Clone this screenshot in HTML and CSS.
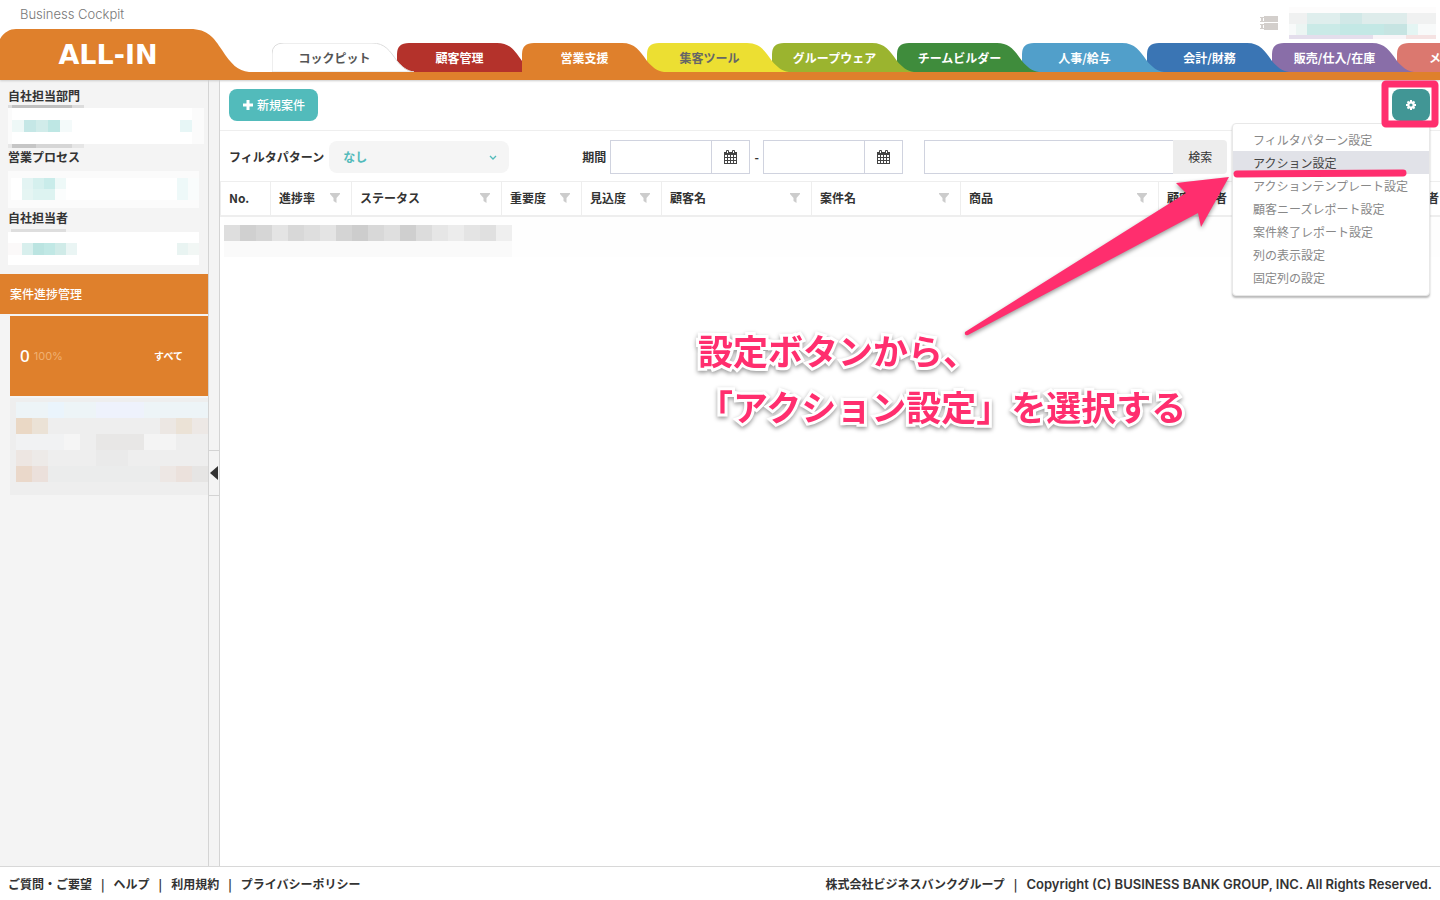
FILE: index.html
```html
<!DOCTYPE html>
<html lang="ja">
<head>
  <meta charset="UTF-8">
  <title>ALL-IN</title>
  <link rel="stylesheet" href="styles.css">
</head>
<body>
  <svg class="defs" aria-hidden="true">
    <symbol id="tab" viewBox="0 0 142 29">
      <path d="M0 29V11Q0 0 12 0H100C113 0 118 8 125 18C130 24 135 28 142 29Z"/>
    </symbol>
    <symbol id="funnel" viewBox="0 0 10 10">
      <path d="M0 0H10V1L6.500 5V10L3.500 8V5L0 1Z"/>
    </symbol>
    <symbol id="calendar" viewBox="0 0 13 14">
      <path d="M0 2H13V14H0ZM1 5V7H3V5ZM4 5V7H6V5ZM7 5V7H9V5ZM10 5V7H12V5ZM1 8V10H3V8ZM4 8V10H6V8ZM7 8V10H9V8ZM10 8V10H12V8ZM1 11V13H3V11ZM4 11V13H6V11ZM7 11V13H9V11ZM10 11V13H12V11Z" fill-rule="evenodd"/>
      <rect x="2" width="3" height="4" rx="1"/>
      <rect x="8" width="3" height="4" rx="1"/>
      <path d="M3.500 1V3M9.500 1V3" stroke="#fff"/>
    </symbol>
  </svg>

  <header class="header">
    <div class="brand">
      <div class="product">Business Cockpit</div>
      <a class="logo" href="#">
        <svg width="272" height="51" viewBox="0 0 272 51">
          <path d="M0 51V10C4 3 10 0 16 0H190C208 0 214 9 222 21C231 35 238 42 249 43H272V51Z" fill="#df802c"/>
        </svg>
        <span>ALL-IN</span>
      </a>
    </div>
    <div class="header-right">
      <div class="user">
        <svg width="18" height="15" viewBox="0 0 18 15" fill="#d3cfcc">
          <path d="M4 0H18V6H4ZM4 7H18V14H4Z"/>
          <path d="M0 1H4V2H3V5H4V6H0V5H1V2H0ZM0 8H4V9H3V12H4V13H0V12H1V9H0Z"/>
        </svg>
        <svg width="147" height="34" viewBox="0 0 147 34" shape-rendering="crispEdges">
          <rect width="147" height="6" fill="#fdfcfc"/>
          <rect y="6" width="147" height="11" fill="#f0f1f1"/>
          <rect x="18" y="6" width="33" height="11" fill="#dfeeed"/>
          <rect x="51" y="6" width="22" height="11" fill="#d1e8e7"/>
          <rect x="73" y="6" width="45" height="11" fill="#deeceb"/>
          <rect y="17" width="147" height="11" fill="#f8fafa"/>
          <rect x="7" y="17" width="11" height="11" fill="#ecf5f3"/>
          <rect x="18" y="17" width="33" height="11" fill="#caeae7"/>
          <rect x="51" y="17" width="44" height="11" fill="#c3e8e5"/>
          <rect x="95" y="17" width="23" height="11" fill="#c6e4e2"/>
          <rect x="118" y="17" width="11" height="11" fill="#e4f5f3"/>
          <rect y="28" width="84" height="4" fill="#e4deec"/>
          <rect x="84" y="28" width="33" height="4" fill="#f8f5f8"/>
          <rect x="117" y="28" width="30" height="4" fill="#f5e3e3"/>
        </svg>
      </div>
      <nav class="tabs">
        <a class="tab cockpit" href="#"><svg><use href="#tab"/></svg><span>コックピット</span></a>
        <a class="tab customer" href="#"><svg><use href="#tab"/></svg><span>顧客管理</span></a>
        <a class="tab sales" href="#"><svg><use href="#tab"/></svg><span>営業支援</span></a>
        <a class="tab leads" href="#"><svg><use href="#tab"/></svg><span>集客ツール</span></a>
        <a class="tab groupware" href="#"><svg><use href="#tab"/></svg><span>グループウェア</span></a>
        <a class="tab team" href="#"><svg><use href="#tab"/></svg><span>チームビルダー</span></a>
        <a class="tab hr" href="#"><svg><use href="#tab"/></svg><span>人事/給与</span></a>
        <a class="tab finance" href="#"><svg><use href="#tab"/></svg><span>会計/財務</span></a>
        <a class="tab stock" href="#"><svg><use href="#tab"/></svg><span>販売/仕入/在庫</span></a>
        <a class="tab mail" href="#"><svg><use href="#tab"/></svg><span>メール</span></a>
      </nav>
    </div>
  </header>

  <div class="layout">
    <aside class="sidebar">
      <div class="search-fields">
        <h2>自社担当部門</h2>
        <svg width="196" height="43" viewBox="0 0 196 43" shape-rendering="crispEdges">
          <rect width="76" height="3" fill="#dcdcdc"/>
          <rect x="4" width="60" height="3" fill="#c0c0c0"/>
          <rect y="3" width="196" height="36" fill="#fbfbfb"/>
          <rect x="4" y="3" width="180" height="36" fill="#fff"/>
          <rect x="4" y="15" width="12" height="12" fill="#eef8f7"/>
          <rect x="16" y="15" width="12" height="12" fill="#c5e7e6"/>
          <rect x="28" y="15" width="12" height="12" fill="#d1ecea"/>
          <rect x="40" y="15" width="12" height="12" fill="#bee7e4"/>
          <rect x="52" y="15" width="12" height="12" fill="#f4fafa"/>
          <rect x="172" y="15" width="12" height="12" fill="#e7f6f6"/>
          <rect y="39" width="76" height="4" fill="#e6e6e6"/>
          <rect x="4" y="39" width="24" height="4" fill="#c6c6c6"/>
          <rect x="28" y="39" width="36" height="4" fill="#d6d6d6"/>
        </svg>
        <h2>営業プロセス</h2>
        <svg width="196" height="43" viewBox="0 0 196 43" shape-rendering="crispEdges">
          <rect y="5" width="191" height="37" fill="#fbfbfb"/>
          <rect x="3" y="12" width="188" height="22" fill="#fff"/>
          <rect x="14" y="12" width="11" height="11" fill="#e3f4f3"/>
          <rect x="25" y="12" width="11" height="11" fill="#d5f0ee"/>
          <rect x="36" y="12" width="11" height="11" fill="#c9ecea"/>
          <rect x="47" y="12" width="11" height="11" fill="#eef9f8"/>
          <rect x="14" y="23" width="11" height="11" fill="#e5f5f3"/>
          <rect x="25" y="23" width="22" height="11" fill="#ddf3f1"/>
          <rect x="47" y="23" width="11" height="11" fill="#fbfdfd"/>
          <rect x="169" y="12" width="11" height="22" fill="#eef9f9"/>
          <rect x="180" y="12" width="11" height="22" fill="#f9fcfc"/>
        </svg>
        <h2>自社担当者</h2>
        <svg width="196" height="43" viewBox="0 0 196 43" shape-rendering="crispEdges">
          <rect x="3" y="2" width="55" height="3" fill="#dedede"/>
          <rect y="5" width="191" height="33" fill="#fff"/>
          <rect y="16" width="14" height="12" fill="#fbf9f9"/>
          <rect x="14" y="16" width="11" height="12" fill="#d8efed"/>
          <rect x="25" y="16" width="11" height="12" fill="#bbe4e1"/>
          <rect x="36" y="16" width="11" height="12" fill="#c1e8e5"/>
          <rect x="47" y="16" width="11" height="12" fill="#d0ebe8"/>
          <rect x="58" y="16" width="11" height="12" fill="#eaf5f4"/>
          <rect x="169" y="16" width="11" height="12" fill="#e9f4f2"/>
          <rect x="180" y="16" width="11" height="12" fill="#f2f7f5"/>
        </svg>
      </div>
      <a class="progress-title" href="#">案件進捗管理</a>
      <a class="progress-item" href="#">
        <span class="count">0</span>
        <span class="percent">100%</span>
        <span class="all">すべて</span>
      </a>
      <svg class="stages" width="198" height="97" viewBox="0 0 198 97" shape-rendering="crispEdges">
        <rect width="198" height="97" fill="#eee"/>
        <rect x="6" y="4" width="192" height="16" fill="#edf4f7"/>
        <rect x="38" y="4" width="16" height="16" fill="#eaf4fc"/>
        <rect x="86" y="4" width="48" height="16" fill="#eef2fc"/>
        <rect x="6" y="20" width="16" height="16" fill="#ead8c5"/>
        <rect x="22" y="20" width="16" height="16" fill="#ebe2d6"/>
        <rect x="150" y="20" width="16" height="16" fill="#ece7e3"/>
        <rect x="166" y="20" width="16" height="16" fill="#ebe2d6"/>
        <rect x="182" y="20" width="16" height="16" fill="#ede8e5"/>
        <rect x="6" y="36" width="64" height="16" fill="#f1f2f3"/>
        <rect x="54" y="36" width="16" height="16" fill="#f5f5f5"/>
        <rect x="86" y="36" width="48" height="16" fill="#e8e7e6"/>
        <rect x="134" y="36" width="32" height="16" fill="#f4f4f4"/>
        <rect x="6" y="52" width="16" height="16" fill="#ede6e2"/>
        <rect x="22" y="52" width="16" height="16" fill="#edeae8"/>
        <rect x="86" y="52" width="32" height="16" fill="#eaeaea"/>
        <rect x="6" y="68" width="16" height="16" fill="#ead8ca"/>
        <rect x="22" y="68" width="16" height="16" fill="#ebe0db"/>
        <rect x="38" y="68" width="112" height="16" fill="#ebecec"/>
        <rect x="150" y="68" width="16" height="16" fill="#ede7e4"/>
        <rect x="166" y="68" width="16" height="16" fill="#ebe1dc"/>
        <rect x="182" y="68" width="16" height="16" fill="#e6e5e4"/>
      </svg>
    </aside>
    <div class="splitter">
      <button type="button" class="collapse">
        <svg width="8" height="14" viewBox="0 0 8 14"><path d="M8 0V14L0 7Z" fill="#333"/></svg>
      </button>
    </div>

    <main class="content">
      <div class="toolbar">
        <button type="button" class="new-deal">
          <svg width="10" height="10" viewBox="0 0 10 10"><path d="M5 0V10M0 5H10" stroke="#fff" stroke-width="3"/></svg>
          新規案件
        </button>
        <div class="settings">
          <button type="button" class="gear">
            <svg width="10" height="10" viewBox="0 0 10 10">
              <circle cx="5" cy="5" r="2.700" fill="none" stroke="#fff" stroke-width="2.200"/>
              <path d="M5 0V2M5 8V10M0 5H2M8 5H10M1.500 1.500L2.700 2.700M7.300 7.300L8.500 8.500M8.500 1.500L7.300 2.700M2.700 7.300L1.500 8.500" stroke="#fff" stroke-width="2"/>
            </svg>
          </button>
          <ul class="menu">
            <li><a href="#">フィルタパターン設定</a></li>
            <li><a class="hover" href="#">アクション設定</a></li>
            <li><a href="#">アクションテンプレート設定</a></li>
            <li><a href="#">顧客ニーズレポート設定</a></li>
            <li><a href="#">案件終了レポート設定</a></li>
            <li><a href="#">列の表示設定</a></li>
            <li><a href="#">固定列の設定</a></li>
          </ul>
        </div>
      </div>

      <form class="filters">
        <label for="pattern">フィルタパターン</label>
        <div class="select-box">
          <select id="pattern"><option>なし</option></select>
          <svg width="8" height="6" viewBox="0 0 8 6"><path d="M1 1L4 4L7 1" fill="none" stroke="#52bbbb" stroke-width="1.300"/></svg>
        </div>
        <label class="period" for="from">期間</label>
        <div class="date">
          <input type="text" id="from">
          <button type="button"><svg width="13" height="14" fill="#444"><use href="#calendar"/></svg></button>
        </div>
        <label class="dash" for="to">-</label>
        <div class="date">
          <input type="text" id="to">
          <button type="button"><svg width="13" height="14" fill="#444"><use href="#calendar"/></svg></button>
        </div>
        <div class="search">
          <input type="text" id="keyword" aria-labelledby="searchButton">
          <button type="button" id="searchButton">検索</button>
        </div>
      </form>

      <div class="table-box">
        <table>
          <colgroup>
            <col class="w50"><col class="w81"><col class="w150"><col class="w80"><col class="w80">
            <col class="w150"><col class="w149"><col class="w198"><col class="w212"><col class="w150">
          </colgroup>
          <thead>
            <tr>
              <th>No.</th>
              <th><div>進捗率<svg><use href="#funnel"/></svg></div></th>
              <th><div>ステータス<svg><use href="#funnel"/></svg></div></th>
              <th><div>重要度<svg><use href="#funnel"/></svg></div></th>
              <th><div>見込度<svg><use href="#funnel"/></svg></div></th>
              <th><div>顧客名<svg><use href="#funnel"/></svg></div></th>
              <th><div>案件名<svg><use href="#funnel"/></svg></div></th>
              <th><div>商品<svg><use href="#funnel"/></svg></div></th>
              <th>顧客担当者</th>
              <th>自社担当者</th>
            </tr>
          </thead>
          <tbody>
            <tr>
              <td colspan="10">
                <svg width="1220" height="40" viewBox="0 0 1220 40" shape-rendering="crispEdges">
                  <rect width="1220" height="40" fill="#fefefe"/>
                  <rect y="8" width="16" height="16" fill="#dedede"/>
                  <rect x="16" y="8" width="16" height="16" fill="#d0d0d0"/>
                  <rect x="32" y="8" width="16" height="16" fill="#d6d6d6"/>
                  <rect x="48" y="8" width="16" height="16" fill="#e4e4e4"/>
                  <rect x="64" y="8" width="16" height="16" fill="#d8d8d8"/>
                  <rect x="80" y="8" width="16" height="16" fill="#dedede"/>
                  <rect x="96" y="8" width="16" height="16" fill="#e4e4e4"/>
                  <rect x="112" y="8" width="16" height="16" fill="#d4d4d4"/>
                  <rect x="128" y="8" width="16" height="16" fill="#cdcdcd"/>
                  <rect x="144" y="8" width="16" height="16" fill="#d8d8d8"/>
                  <rect x="160" y="8" width="16" height="16" fill="#dfdfdf"/>
                  <rect x="176" y="8" width="16" height="16" fill="#cfcfcf"/>
                  <rect x="192" y="8" width="16" height="16" fill="#dcdcdc"/>
                  <rect x="208" y="8" width="16" height="16" fill="#e6e6e6"/>
                  <rect x="224" y="8" width="16" height="16" fill="#ececec"/>
                  <rect x="240" y="8" width="16" height="16" fill="#e4e4e4"/>
                  <rect x="256" y="8" width="16" height="16" fill="#e0e0e0"/>
                  <rect x="272" y="8" width="16" height="16" fill="#efefef"/>
                  <rect y="24" width="288" height="16" fill="#fafafa"/>
                </svg>
              </td>
            </tr>
          </tbody>
        </table>
      </div>
    </main>
  </div>

  <footer class="footer">
    <nav>
      <a href="#">ご質問・ご要望</a><span>|</span><a href="#">ヘルプ</a><span>|</span><a href="#">利用規約</a><span>|</span><a href="#">プライバシーポリシー</a>
    </nav>
    <div class="company">
      株式会社ビジネスバンクグループ<span>|</span><span class="copyright">Copyright (C) BUSINESS BANK GROUP, INC. All Rights Reserved.</span>
    </div>
  </footer>

  <!-- guide drawn over the screen -->
  <div class="guide">
    <svg width="760" height="440" viewBox="0 0 760 440">
      <path class="arrow" d="M549 177L496 183L506 193L285 332Q284 336 288 335L518 213L521 227Z" fill="#ff2e6e"/>
      <path d="M557 174L723 173" stroke="#ff2e6e" stroke-width="7" stroke-linecap="round"/>
      <rect x="705" y="84" width="50" height="40" rx="1" fill="none" stroke="#ff2e6e" stroke-width="7" stroke-linejoin="round"/>
    </svg>
    <p>設定ボタンから、<br>「アクション設定」を選択する</p>
  </div>
</body>
</html>
```
FILE: styles.css
```css
* {
  box-sizing: border-box;
}
body {
  margin: 0;
  min-height: 100vh;
  display: flex;
  flex-direction: column;
  position: relative;
  overflow-x: hidden;
  background: #fff;
  color: #333;
  font-family: "Noto Sans CJK JP", sans-serif;
  font-size: 12px;
  font-weight: bold;
  line-height: 18px;
}
a {
  color: inherit;
  text-decoration: none;
}
button,
input,
select {
  font: inherit;
  color: inherit;
  margin: 0;
  padding: 0;
  border: 0;
  background: none;
}
svg {
  display: block;
  flex-shrink: 0;
}
.defs {
  position: absolute;
  width: 0;
  height: 0;
}

/* header */
.header {
  display: flex;
  overflow: hidden;
  box-shadow: 0 1px 2px #ccc;
  z-index: 1;
}
.brand {
  width: 272px;
  flex-shrink: 0;
}
.product {
  height: 29px;
  padding: 5px 20px;
  font-family: Inter, sans-serif;
  font-size: 13px;
  font-weight: 300;
  color: #777;
}
.logo {
  display: block;
  position: relative;
}
.logo span {
  position: absolute;
  left: 0;
  top: 0;
  width: 216px;
  line-height: 52px;
  text-align: center;
  color: #fff;
  font-family: "DejaVu Sans", sans-serif;
  font-size: 27px;
  font-weight: bold;
}
.header-right {
  flex: 1;
  min-width: 0;
  border-bottom: 8px solid #df802c;
}
.user {
  height: 43px;
  padding: 4px 4px 0;
  display: flex;
  justify-content: flex-end;
  align-items: center;
  gap: 11px;
}
.tabs {
  display: flex;
  height: 29px;
}
.tab {
  position: relative;
  width: 125px;
  flex-shrink: 0;
  text-align: center;
  line-height: 30px;
  color: #fff;
}
.tab svg {
  position: absolute;
  left: 0;
  top: 0;
  width: 142px;
  height: 29px;
  overflow: visible;
}
.tab span {
  position: relative;
}
.cockpit { z-index: 10; fill: #fff; stroke: #ddd; color: #555; }
.customer { z-index: 8; fill: #b4322b; }
.sales { z-index: 9; fill: #df802c; }
.leads { z-index: 7; fill: #ecdf32; color: #666; }
.groupware { z-index: 6; fill: #9bb42f; }
.team { z-index: 5; fill: #3f8c3c; }
.hr { z-index: 4; fill: #519fca; }
.finance { z-index: 3; fill: #3a75b4; }
.stock { z-index: 2; fill: #896ea8; }
.mail { z-index: 1; fill: #db786f; }
.mail span {
  display: block;
  padding-left: 32px;
  text-align: left;
}

/* sidebar */
.layout {
  flex: 1;
  display: flex;
}
.sidebar {
  width: 209px;
  flex-shrink: 0;
  background: #f4f4f4;
  border-right: 1px solid #d4d4d4;
}
.search-fields {
  height: 194px;
  padding: 7px 8px;
}
.search-fields h2 {
  margin: 0;
  height: 18px;
  font-size: 12px;
}
.progress-title {
  display: block;
  padding: 11px 10px;
  background: #df802c;
  color: #fff;
  font-weight: 500;
}
.progress-item {
  display: flex;
  align-items: center;
  height: 80px;
  margin: 2px 0 2px 10px;
  padding: 0 25px 0 10px;
  background: #df802c;
  color: #fff;
  font-size: 10px;
}
.count {
  font-family: "Noto Sans", sans-serif;
  font-size: 17px;
  font-weight: 500;
}
.percent {
  margin-left: 4px;
  font-family: Inter, sans-serif;
  font-size: 11px;
  font-weight: 400;
  color: #f0b071;
}
.all {
  margin-left: auto;
}
.stages {
  margin-left: 10px;
}
.splitter {
  width: 11px;
  flex-shrink: 0;
  padding-top: 370px;
  background: #f4f4f4;
  border-right: 1px solid #d4d4d4;
}
.collapse {
  display: flex;
  align-items: center;
  width: 10px;
  height: 46px;
  padding-left: 1px;
  border-top: 1px solid #d4d4d4;
  border-bottom: 1px solid #d4d4d4;
}

/* content */
.content {
  flex: 1;
  min-width: 0;
}
.toolbar {
  display: flex;
  justify-content: space-between;
  padding: 9px 10px 9px 9px;
  border-bottom: 1px solid #eee;
}
.new-deal {
  display: flex;
  align-items: center;
  gap: 4px;
  height: 32px;
  padding: 0 13px 0 14px;
  border-radius: 8px;
  background: #52bbbb;
  color: #fff;
  font-weight: 500;
}
.settings {
  position: relative;
}
.gear {
  display: flex;
  align-items: center;
  justify-content: center;
  width: 38px;
  height: 32px;
  border-radius: 8px;
  background: #419695;
}
.menu {
  position: absolute;
  top: 34px;
  right: 0;
  width: 198px;
  margin: 0;
  padding: 4px 0 6px;
  list-style: none;
  background: #fff;
  border: 1px solid #e8e8e8;
  border-radius: 4px;
  box-shadow: 0 2px 2px #bbb;
  font-weight: 400;
  color: #888;
}
.menu a {
  display: block;
  padding: 0 20px;
  line-height: 23px;
}
.menu .hover {
  background: #e1e2e8;
  color: #444;
}
.filters {
  display: flex;
  align-items: center;
  height: 50px;
  padding: 2px 9px 0;
}
.select-box {
  position: relative;
  margin-left: 5px;
}
.select-box select {
  display: block;
  appearance: none;
  width: 180px;
  height: 32px;
  padding: 0 14px;
  border-radius: 8px;
  background: #f5f5f5;
  color: #52bbbb;
}
.select-box svg {
  position: absolute;
  right: 12px;
  top: 14px;
}
.period {
  margin: 0 4px 0 73px;
}
.date,
.search {
  display: flex;
  height: 34px;
}
.date {
  border: 1px solid #d0d3df;
}
.date input {
  width: 100px;
}
.date button {
  display: flex;
  align-items: center;
  justify-content: center;
  width: 38px;
  border-left: 1px solid #d0d3df;
}
.dash {
  width: 13px;
  text-align: center;
}
.search {
  margin-left: 21px;
}
.search input {
  width: 249px;
  border: 1px solid #d0d3df;
  border-right: 0;
}
.search button {
  width: 54px;
  border-radius: 0 4px 4px 0;
  background: #ededed;
  font-weight: 400;
}
.table-box {
  overflow: hidden;
}
table {
  width: 1300px;
  table-layout: fixed;
  border-collapse: collapse;
}
.w50 { width: 50px; }
.w80 { width: 80px; }
.w81 { width: 81px; }
.w149 { width: 149px; }
.w150 { width: 150px; }
.w198 { width: 198px; }
.w212 { width: 212px; }
th {
  height: 34px;
  padding: 0 11px 0 8px;
  border: 1px solid #eee;
  border-bottom: 2px solid #eee;
  text-align: left;
}
th div {
  display: flex;
  align-items: center;
  justify-content: space-between;
}
th svg {
  width: 10px;
  height: 10px;
  fill: #ccc;
}
td {
  padding: 0 0 0 3px;
}

/* footer */
.footer {
  display: flex;
  justify-content: space-between;
  height: 34px;
  padding: 8px;
  border-top: 1px solid #d8d8d8;
}
.footer span {
  margin-left: 9px;
}
.footer nav span {
  margin-right: 9px;
}
.footer .copyright {
  font-family: Inter, sans-serif;
  font-size: 13px;
  font-weight: 600;
}

/* guide */
.guide {
  position: absolute;
  top: 0;
  right: 0;
  width: 760px;
  z-index: 20;
  pointer-events: none;
}
.arrow,
.guide p {
  filter: drop-shadow(0 2px 2px rgba(0, 0, 0, 0.4));
}
.guide p {
  position: absolute;
  left: 18px;
  top: 322px;
  margin: 0;
  white-space: nowrap;
  font-size: 35px;
  font-weight: bold;
  line-height: 56px;
  color: #ff2e6e;
  -webkit-text-stroke: 6px #fff;
  paint-order: stroke fill;
}
```
